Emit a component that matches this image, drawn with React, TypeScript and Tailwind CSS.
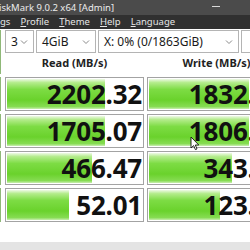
import React from "react";

const bar =
  "bg-[linear-gradient(to_bottom,#eef9e6_0%,#b4ec8c_12%,#7ddc44_35%,#6ad22c_70%,#86dc52_92%,#c9eeb0_100%)]";

const rows = [
  { read: "2202.32", write: "1832.45", r: 98, w: 100 },
  { read: "1705.07", write: "1806.61", r: 98, w: 100 },
  { read: "466.47", write: "343.58", r: 85, w: 83 },
  { read: "52.01", write: "123.05", r: 62, w: 71 },
];

const Chevron = () => (
  <svg width="8" height="6" viewBox="0 0 8 6" className="shrink-0">
    <path d="M1 1.5 L4 4.5 L7 1.5" fill="none" stroke="#8a8a8a" strokeWidth="1" />
  </svg>
);

const Select = ({ text, w, pad }: { text: string; w: string; pad: string }) => (
  <div
    className={`${w} h-[23px] border border-[#b4b4b4] bg-white flex items-center justify-between ${pad} pr-[5px] text-[12px] text-[#1a1a1a]`}
  >
    <span>{text}</span>
    <Chevron />
  </div>
);

const Meter = ({ value, pct }: { value: string; pct: number }) => (
  <div className="relative w-[139px] h-[34px] shrink-0 border border-[#a3a3a3] bg-white overflow-hidden">
    <div className={`absolute left-[1px] top-[1px] bottom-[1px] ${bar}`} style={{ width: `${pct}px` }} />
    <div className="relative h-full flex items-center justify-end pr-[1px] text-[26px] font-bold leading-none text-[#111] tracking-[-0.2px]">
      {value}
    </div>
  </div>
);

export default function App() {
  return (
    <div
      className="relative w-[250px] h-[250px] overflow-hidden bg-white"
      style={{ fontFamily: '"Noto Sans", "Open Sans", sans-serif' }}
    >
      <div className="h-[15px] bg-[#4b4b4b] flex items-center justify-between text-[9.5px] text-[#ececec] leading-none">
        <span className="-ml-[1px]">iskMark 9.0.2 x64 [Admin]</span>
        <span className="mr-[30px] mt-[-2px] w-[8px] h-[1px] bg-[#d8d8d8]" />
      </div>
      <div className="h-[14px] bg-[#303030] flex items-center text-[9.5px] text-[#e6e6e6] leading-none gap-[10px]">
        <span>gs</span>
        <span><u>P</u>rofile</span>
        <span><u>T</u>heme</span>
        <span><u>H</u>elp</span>
        <span><u>L</u>anguage</span>
      </div>

      <div className="flex pt-[1px]">
        <div className="w-[8px] flex flex-col gap-[3px]">
          <div className={`relative h-[44px] border-r border-b border-[#8fb878] ${bar}`}>
            <div className="absolute right-0 bottom-0 w-0 h-0 border-l-[4px] border-l-transparent border-b-[4px] border-b-[#e0903a]" />
          </div>
          {rows.map((_, i) => (
            <div key={i} className={`h-[34px] border-r border-y border-[#8fb878] ${bar}`} />
          ))}
        </div>

        <div className="ml-[4px] flex flex-col gap-[3px]">
          <div className="flex flex-col">
            <div className="h-[23px] flex gap-[2px]">
              <Select text="3" w="w-[29px]" pad="pl-[5px]" />
              <Select text="4GiB" w="w-[60px]" pad="pl-[5px]" />
              <Select text="X: 0% (0/1863GiB)" w="w-[141px]" pad="pl-[5px]" />
              <div className="w-[20px] h-[23px] border border-[#b4b4b4]" />
            </div>
            <div className="h-[21px] flex">
              <div className="w-[139px] flex items-center justify-center text-[11px] font-bold text-[#222] pb-[1px]">
                Read (MB/s)
              </div>
              <div className="ml-[3px] w-[139px] flex items-center justify-center text-[11px] font-bold text-[#222] pb-[1px]">
                Write (MB/s)
              </div>
            </div>
          </div>
          {rows.map((r, i) => (
            <div key={i} className="flex gap-[3px]">
              <Meter value={r.read} pct={r.r} />
              <Meter value={r.write} pct={r.w} />
            </div>
          ))}
        </div>
      </div>

      <div className="absolute left-0 right-0 bottom-0 h-[8px] bg-[#e4e4e4]" />

      <svg className="absolute left-[190px] top-[136px]" width="10" height="15" viewBox="0 0 10 15">
        <path d="M1 1 L1 12 L3.6 9.6 L5.4 13.6 L7 12.9 L5.3 9 L8.8 9 Z" fill="#fff" stroke="#111" strokeWidth="0.9" strokeLinejoin="round" />
      </svg>
    </div>
  );
}
